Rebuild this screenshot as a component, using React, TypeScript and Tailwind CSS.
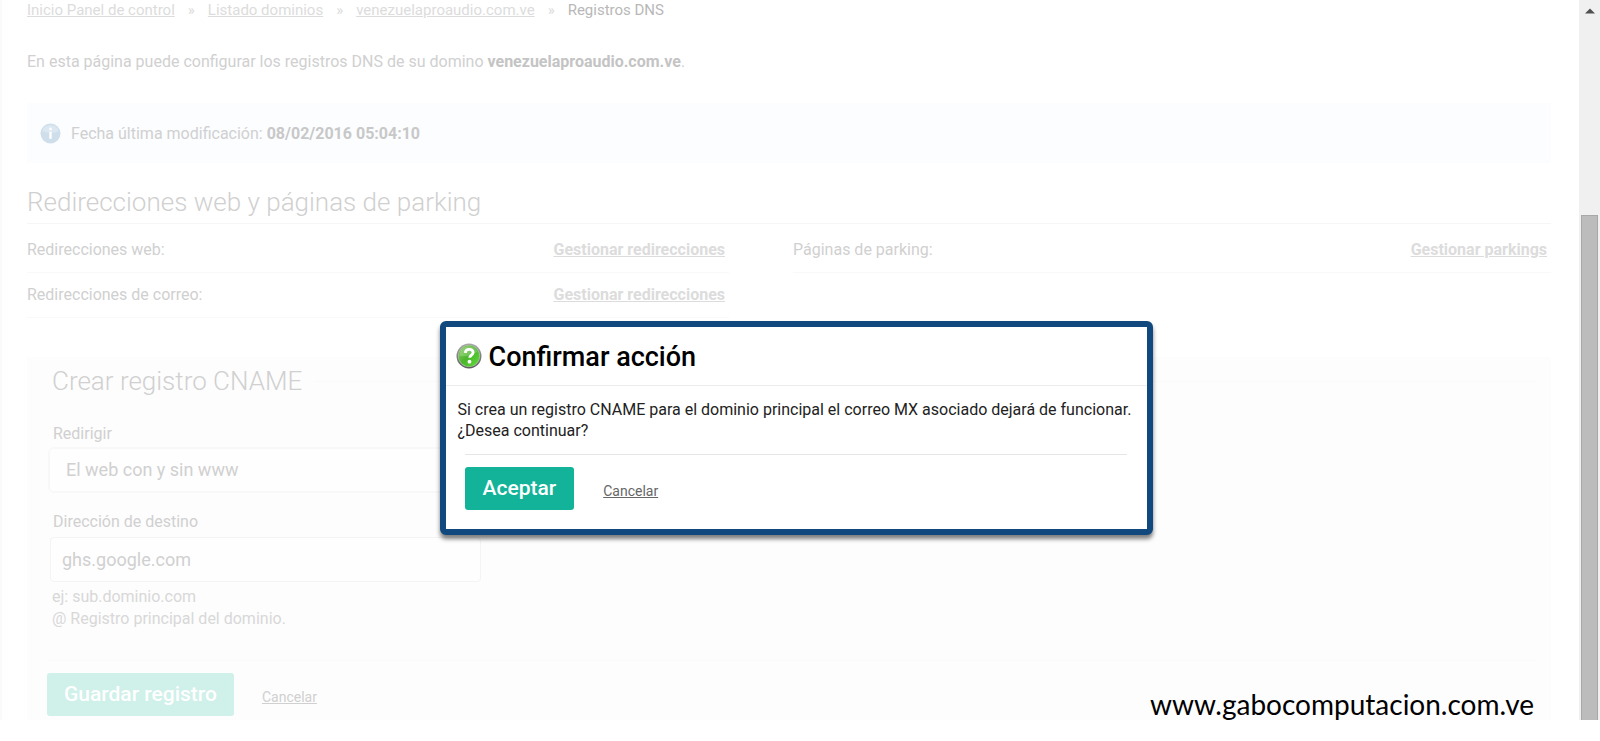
import { useState } from 'react'

type RowProps = {
  label: string
  action: string
}

function LinkRow({ label, action }: RowProps) {
  return (
    <div className="flex h-[45px] items-center justify-between border-b border-[#f9f9f9] pr-1">
      <span>{label}</span>
      <a href="#" className="font-bold text-[#dcdcdc] underline">{action}</a>
    </div>
  )
}

function InfoIcon() {
  return (
    <svg width="21" height="21" viewBox="0 0 21 21" aria-hidden="true">
      <circle cx="10.5" cy="10.5" r="10" fill="#cfdeeb" />
      <path d="M2 8a9 9 0 0 1 17 0q-8 4-17 0z" fill="#dbe7f1" />
      <circle cx="10.5" cy="6" r="1.4" fill="#fff" />
      <path d="M9.300 8.800h2.400v7H9.300z" fill="#fff" />
    </svg>
  )
}

function QuestionIcon() {
  return (
    <svg width="26" height="26" viewBox="0 0 26 26" aria-hidden="true">
      <defs>
        <linearGradient id="rim" x1="0" y1="0" x2="0" y2="1">
          <stop offset="0" stopColor="#a8a8a8" />
          <stop offset="1" stopColor="#5c5c5c" />
        </linearGradient>
        <linearGradient id="ball" x1="0" y1="0" x2="1" y2="1">
          <stop offset="0" stopColor="#8ccb6c" />
          <stop offset="0.5" stopColor="#4bb52c" />
          <stop offset="1" stopColor="#5fe038" />
        </linearGradient>
      </defs>
      <circle cx="13" cy="13" r="12.5" fill="url(#rim)" />
      <circle cx="13" cy="13" r="11" fill="#a9c89e" />
      <circle cx="13" cy="13" r="10.4" fill="url(#ball)" />
      <path d="M3.5 13a9.500 9.500 0 0 1 18-4.500Q15 14 3.500 13z" fill="#fff" opacity="0.2" />
      <path
        d="M9.300 9.800c.2-2.400 1.700-3.500 3.900-3.500 2.300 0 3.900 1.100 3.900 3.100 0 2.600-3.400 2.700-3.400 5.400"
        fill="none"
        stroke="#fff"
        strokeWidth="2.800"
      />
      <circle cx="13.500" cy="18.700" r="1.900" fill="#fff" />
    </svg>
  )
}

function ConfirmDialog() {
  return (
    <div className="absolute inset-0 flex items-start justify-center pt-[321px] pr-2">
      <div
        role="dialog"
        aria-labelledby="dialog-title"
        className="w-[713px] rounded-md border-6 border-[#11497e] bg-white pb-[19px] text-black shadow-[0_4px_4px_rgba(0,0,0,0.5)]"
      >
        <div className="flex h-[59px] items-center gap-[7px] border-b border-[#ececec] px-[10px]">
          <QuestionIcon />
          <h2 id="dialog-title" className="pt-[2px] text-[27px] font-medium">Confirmar acción</h2>
        </div>
        <p className="px-3 pt-[13px] leading-[21px] text-[#222]">
          Si crea un registro CNAME para el dominio principal el correo MX asociado dejará de funcionar.
          <br />
          ¿Desea continuar?
        </p>
        <div className="mr-5 ml-[19px] mt-[13px] flex items-center gap-[29px] border-t border-[#e6e6e6] pt-3">
          <button type="button" className="h-[43px] rounded-[3px] bg-[#12b398] px-[18px] text-[21px] font-medium text-white">
            Aceptar
          </button>
          <a href="#" className="pt-1 text-sm text-[#666] underline">Cancelar</a>
        </div>
      </div>
    </div>
  )
}

function ScrollTrack() {
  return (
    <div className="flex w-[21px] shrink-0 flex-col items-center bg-[#f0f0f0]">
      <svg width="10" height="6" viewBox="0 0 10 6" className="mt-2" aria-hidden="true">
        <path d="M5 0.500L10 5.500H0z" fill="#505050" />
      </svg>
      <div className="mt-[201px] w-[17px] flex-1 border border-b-0 border-[#a8a8a8] bg-[#bcbcbc]" />
    </div>
  )
}

export default function App() {
  const [source, setSource] = useState('El web con y sin www')
  const [target, setTarget] = useState('ghs.google.com')

  return (
    <div className="relative bg-white pb-5 font-[Roboto,'Liberation_Sans',sans-serif] text-base text-[#d0d0d0]">
      <div className="flex">
        <main className="min-w-0 flex-1 border-l-2 border-[#fafafa] pr-7 pl-[25px]">
          {/* Breadcrumb */}
          <nav className="flex h-5 items-center gap-[13px] text-[15px] text-[#dcdcdc]">
            <a href="#" className="underline">Inicio Panel de control</a>
            <span>»</span>
            <a href="#" className="underline">Listado dominios</a>
            <span>»</span>
            <a href="#" className="underline">venezuelaproaudio.com.ve</a>
            <span>»</span>
            <span className="text-[#b8b8b8]">Registros DNS</span>
          </nav>

          <p className="mt-[30px] leading-6">
            En esta página puede configurar los registros DNS de su domino{' '}
            <b className="text-[#c4c4c4]">venezuelaproaudio.com.ve</b>.
          </p>

          <div className="mt-[29px] flex h-[60px] items-center gap-[10px] bg-[#fbfdff] px-[13px] pt-px">
            <InfoIcon />
            <span>
              Fecha última modificación: <b className="text-[#c8c8c8]">08/02/2016 05:04:10</b>
            </span>
          </div>

          {/* Redirects */}
          <h2 className="mt-[21px] border-b border-[#f6f6f6] pb-[3px] text-[26px] leading-9 font-light">
            Redirecciones web y páginas de parking
          </h2>
          <div className="grid grid-cols-[702fr_758fr] gap-16 pt-1">
            <div>
              <LinkRow label="Redirecciones web:" action="Gestionar redirecciones" />
              <LinkRow label="Redirecciones de correo:" action="Gestionar redirecciones" />
            </div>
            <div>
              <LinkRow label="Páginas de parking:" action="Gestionar parkings" />
            </div>
          </div>

          {/* CNAME form */}
          <form className="mt-[39px] flex flex-col items-start bg-[#fdfdfd] pt-[6px] pr-[14px] pb-1 pl-5">
            <div className="flex w-full items-center gap-3 pl-[5px]">
              <h2 className="text-[26px] leading-9 font-light">Crear registro CNAME</h2>
              <div className="h-px flex-1 bg-[#fafafa]" />
            </div>
            <label htmlFor="source" className="mt-[25px] ml-[6px] leading-5">Redirigir</label>
            <select
              id="source"
              value={source}
              onChange={(e) => setSource(e.target.value)}
              className="mt-[3px] ml-px h-[46px] w-[430px] appearance-none rounded-md border-2 border-[#f8f8f8] bg-[#fefefe] px-4 text-lg"
            >
              <option>El web con y sin www</option>
            </select>
            <label htmlFor="target" className="mt-[19px] ml-[6px] leading-5">Dirección de destino</label>
            <input
              id="target"
              type="text"
              value={target}
              onChange={(e) => setTarget(e.target.value)}
              className="mt-[5px] ml-[3px] h-[45px] w-[431px] rounded-sm border border-[#f4f4f4] bg-[#fefefe] px-[11px] text-lg"
            />
            <p className="mt-1 ml-[5px] leading-[22px] text-[#d8d8d8]">
              ej: sub.dominio.com
              <br />
              @ Registro principal del dominio.
            </p>
            <div className="mt-[30px] flex w-full items-center gap-7 border-t border-[#fafafa] pt-3">
              <button type="button" className="h-[43px] rounded-[3px] bg-[#d0f0ea] px-[17px] text-[21px] font-medium text-white">
                Guardar registro
              </button>
              <a href="#" className="pt-1 text-sm underline">Cancelar</a>
            </div>
          </form>
        </main>
        <ScrollTrack />
      </div>

      <ConfirmDialog />

      <p className="absolute right-[66px] bottom-5 font-[Lato,sans-serif] text-[28px] leading-8 text-black">
        www.gabocomputacion.com.ve
      </p>
    </div>
  )
}
